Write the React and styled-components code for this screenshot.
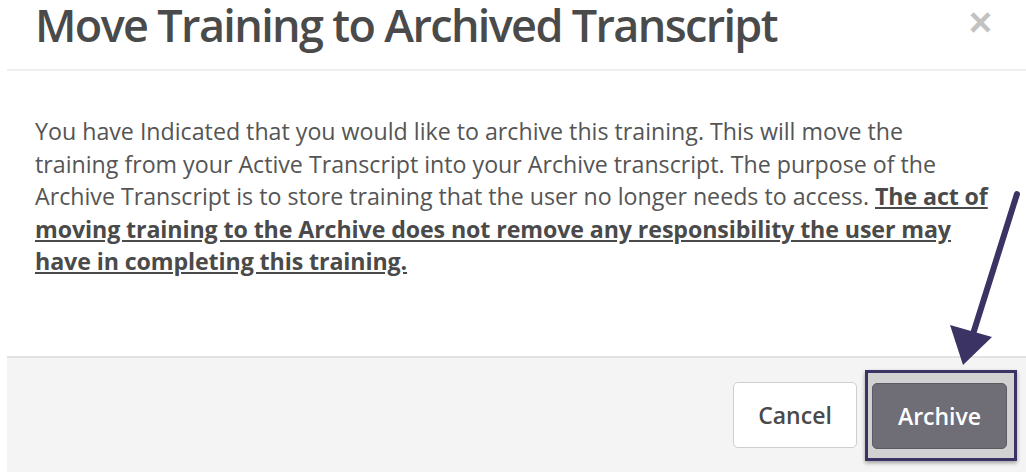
import styled, { createGlobalStyle } from "styled-components";

const GlobalStyle = createGlobalStyle`
  html, body {
    margin: 0;
    padding: 0;
    background: #ffffff;
  }
  body {
    font-family: "Open Sans", "Noto Sans", sans-serif;
    color: #555555;
  }
`;

export default function App() {
  return (
    <>
      <GlobalStyle />
      <Modal>
        <Header>
          <Title>Move Training to Archived Transcript</Title>
          <CloseButton aria-label="Close">×</CloseButton>
        </Header>
        <Body>
          <Message>
            You have Indicated that you would like to archive this training. This will move the
            <br />
            training from your Active Transcript into your Archive transcript. The purpose of the
            <br />
            Archive Transcript is to store training that the user no longer needs to access.{" "}
            <Strong>
              The act of
              <br />
              moving training to the Archive does not remove any responsibility the user may
              <br />
              have in completing this training.
            </Strong>
          </Message>
        </Body>
        <Footer>
          <Button>Cancel</Button>
          <Highlight>
            <Button $primary>Archive</Button>
          </Highlight>
        </Footer>
        {/* annotation arrow pointing down at the Archive button */}
        <Pointer viewBox="0 0 80 190" aria-hidden="true">
          <line x1="72" y1="8" x2="28" y2="148" stroke="#3b3363" strokeWidth="6" strokeLinecap="round" />
          <polygon points="5,139 47,151 18,179" fill="#3b3363" />
        </Pointer>
      </Modal>
    </>
  );
}

const Modal = styled.div`
  position: relative;
  margin-left: 7px;
  height: 472px;
  display: flex;
  flex-direction: column;
  overflow: hidden;
`;

const Header = styled.div`
  height: 71px;
  box-sizing: border-box;
  display: flex;
  align-items: flex-start;
  justify-content: space-between;
  padding: 0 34px 0 28px;
  border-bottom: 2px solid #efefef;
`;

const Title = styled.h1`
  margin: 0;
  font-size: 45px;
  line-height: 49px;
  font-weight: 600;
  color: #4a4a4a;
  letter-spacing: -1.65px;
  white-space: nowrap;
`;

const CloseButton = styled.button`
  border: none;
  background: none;
  padding: 0;
  margin-top: 0;
  font-family: "Liberation Sans", sans-serif;
  font-size: 40px;
  font-weight: 700;
  line-height: normal;
  color: #c2c2c2;
  cursor: pointer;
`;

const Body = styled.div`
  flex: 1;
  padding: 44px 28px 0;
`;

const Message = styled.p`
  margin: 0;
  font-size: 23.2px;
  line-height: 32.6px;
  color: #555555;
  white-space: nowrap;
`;

const Strong = styled.strong`
  font-weight: 700;
  text-decoration: underline;
  color: #4a4a4a;
  letter-spacing: -0.1px;
`;

const Footer = styled.div`
  height: 116px;
  box-sizing: border-box;
  display: flex;
  align-items: center;
  justify-content: flex-end;
  gap: 8px;
  padding: 0 9px 0 0;
  background: #f4f4f4;
  border-top: 2px solid #e2e2e2;
`;

const Button = styled.button`
  height: 66px;
  padding: 0 22px;
  border-radius: 5px;
  font-family: "Open Sans", "Noto Sans", sans-serif;
  font-size: 23px;
  font-weight: 600;
  cursor: pointer;
  border: 1px solid ${({ $primary }) => ($primary ? "#5c5b63" : "#cfcfcf")};
  background: ${({ $primary }) => ($primary ? "#6f6e77" : "#ffffff")};
  color: ${({ $primary }) => ($primary ? "#ffffff" : "#4a4a4a")};
  min-width: ${({ $primary }) => ($primary ? "135px" : "124px")};
`;

const Highlight = styled.div`
  display: flex;
  padding: 10px 7px 9px 4px;
  border: 3px solid #3b3363;
  background: #d2d2d2;
  box-shadow: 0 2px 4px rgba(0, 0, 0, 0.35);
`;

const Pointer = styled.svg`
  position: absolute;
  left: 938px;
  top: 186px;
  width: 80px;
  height: 190px;
  overflow: visible;
`;
